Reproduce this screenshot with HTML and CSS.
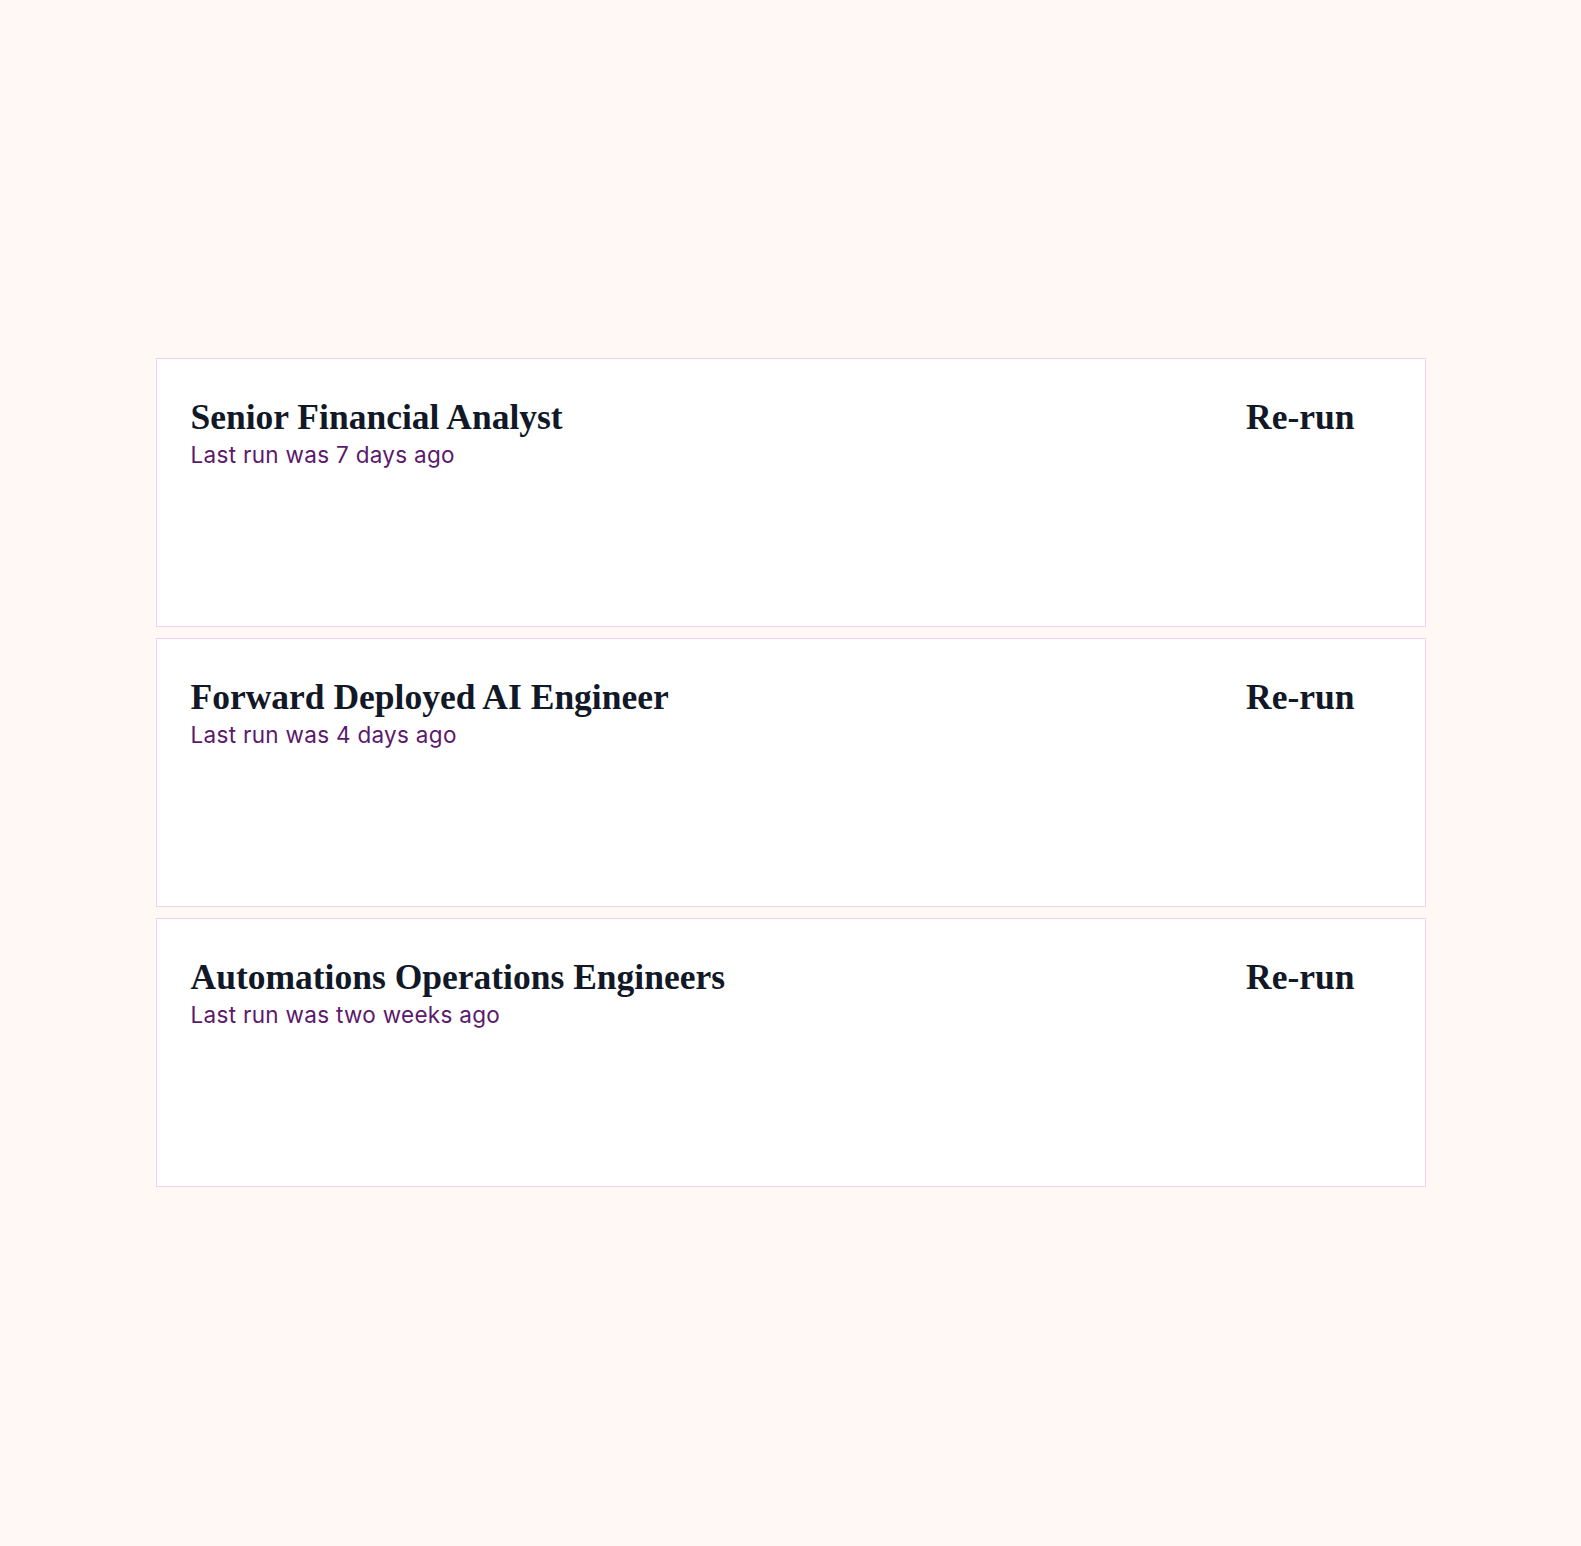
FILE: index.html
```html
<!DOCTYPE html>
<html>
<head>
<meta charset="utf-8">
<link rel="stylesheet" href="styles.css">
</head>
<body>
<main class="list">
  <section class="card">
    <div class="info">
      <h2 class="title">Senior Financial Analyst</h2>
      <p class="meta">Last run was 7 days ago</p>
    </div>
    <button class="rerun">Re-run</button>
  </section>
  <section class="card">
    <div class="info">
      <h2 class="title">Forward Deployed AI Engineer</h2>
      <p class="meta">Last run was 4 days ago</p>
    </div>
    <button class="rerun">Re-run</button>
  </section>
  <section class="card">
    <div class="info">
      <h2 class="title">Automations Operations Engineers</h2>
      <p class="meta">Last run was two weeks ago</p>
    </div>
    <button class="rerun">Re-run</button>
  </section>
</main>
</body>
</html>
```
FILE: styles.css
```css
html, body {
  margin: 0;
  padding: 0;
  background: #fff8f5;
}
body {
  min-height: 1546px;
}
.list {
  width: 1270px;
  margin: 0 auto;
  padding-top: 358px;
  display: flex;
  flex-direction: column;
  gap: 11px;
}
.card {
  box-sizing: border-box;
  height: 269px;
  background: #ffffff;
  border: 1px solid #f3d2ef;
  padding: 38px 70px 0 34px;
  display: flex;
  justify-content: space-between;
  align-items: flex-start;
}
.title {
  margin: 0;
  font-family: "Liberation Serif", serif;
  font-weight: 700;
  font-size: 35.5px;
  line-height: 40px;
  color: #111827;
}
.meta {
  margin: 3px 0 0;
  font-family: "Inter", sans-serif;
  font-size: 22.5px;
  letter-spacing: 0.3px;
  line-height: 30px;
  color: #5b1a6b;
}
.rerun {
  background: none;
  border: 0;
  padding: 0;
  font-family: "Liberation Serif", serif;
  font-weight: 700;
  font-size: 35.5px;
  line-height: 40px;
  color: #111827;
  cursor: pointer;
}
```
